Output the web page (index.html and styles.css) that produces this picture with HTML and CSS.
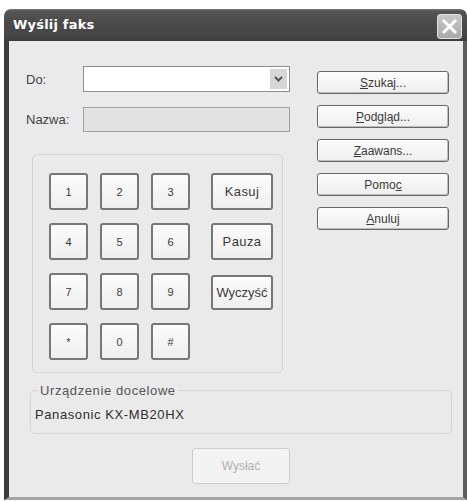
FILE: index.html
```html
<!DOCTYPE html>
<html lang="pl">
<head>
<meta charset="utf-8">
<title>Wyślij faks</title>
<link rel="stylesheet" href="styles.css">
</head>
<body>
<div class="window">
  <div class="titlebar">
    <span class="title">Wyślij faks</span>
    <span class="close">
      <svg width="23" height="23" viewBox="0 0 23 23"><path d="M6 6 L17 17 M17 6 L6 17" stroke="#fff" stroke-width="3" stroke-linecap="square" fill="none"/></svg>
    </span>
  </div>
  <div class="client">
    <div class="top">
      <div class="left">
        <div class="row">
          <span class="label">Do:</span>
          <div class="combo">
            <span class="combo-btn"><svg width="9" height="6" viewBox="0 0 9 6"><path d="M1 1 L4.5 4.5 L8 1" stroke="#555" stroke-width="2" fill="none"/></svg></span>
          </div>
        </div>
        <div class="row row-name">
          <span class="label">Nazwa:</span>
          <div class="textbox"></div>
        </div>
        <div class="keypad">
          <div class="keys">
            <button class="btn key">1</button>
            <button class="btn key">2</button>
            <button class="btn key">3</button>
            <button class="btn side">Kasuj</button>
            <button class="btn key">4</button>
            <button class="btn key">5</button>
            <button class="btn key">6</button>
            <button class="btn side">Pauza</button>
            <button class="btn key">7</button>
            <button class="btn key">8</button>
            <button class="btn key">9</button>
            <button class="btn side clear">Wyczyść</button>
            <button class="btn key">*</button>
            <button class="btn key">0</button>
            <button class="btn key">#</button>
          </div>
        </div>
      </div>
      <div class="right">
        <button class="btn cmd"><u>S</u>zukaj...</button>
        <button class="btn cmd"><u>P</u>odgląd...</button>
        <button class="btn cmd"><u>Z</u>aawans...</button>
        <button class="btn cmd">Pomo<u>c</u></button>
        <button class="btn cmd"><u>A</u>nuluj</button>
      </div>
    </div>
    <fieldset class="device">
      <legend>Urządzenie docelowe</legend>
      <div class="device-name">Panasonic KX-MB20HX</div>
    </fieldset>
    <div class="send-row">
      <button class="btn send" disabled>Wysłać</button>
    </div>
  </div>
</div>
</body>
</html>
```
FILE: styles.css
```css
body {
  margin: 0;
  background: #ffffff;
  font-family: "Liberation Sans", Arial, sans-serif;
  color: #383838;
}

.window {
  margin: 9px 0 0 4px;
  width: 463px;
}

.titlebar {
  height: 32px;
  box-sizing: border-box;
  display: flex;
  justify-content: space-between;
  padding: 0 5px 0 9px;
  background: linear-gradient(#7a7a7a 0, #555 2px, #4b4b4b 40%, #444 90%, #3a3a3a 100%);
  border-radius: 7px 7px 0 0;
}

.title {
  color: #fff;
  font-family: "DejaVu Sans", "Liberation Sans", sans-serif;
  font-weight: bold;
  font-size: 13px;
  line-height: 32px;
  letter-spacing: 0.2px;
}

.close {
  margin-top: 5px;
  width: 25px;
  height: 25px;
  box-sizing: border-box;
  border: 1px solid #e2e2e2;
  border-radius: 3px;
  background: linear-gradient(#c9c9c9, #a9a9a9);
  display: flex;
  align-items: center;
  justify-content: center;
}

.client {
  height: 459px;
  box-sizing: border-box;
  background: #eaeaea;
  border-left: 5px solid #3c3c3c;
  border-right: 4px solid #5c5c5c;
  border-bottom: 3px solid #a4a4a4;
  padding: 25px 0 0 17px;
}

.top {
  display: flex;
  gap: 27px;
}

.left {
  width: 264px;
}

.row {
  display: flex;
  align-items: center;
  height: 26px;
}

.row-name {
  margin-top: 15px;
  height: 25px;
}

.label {
  width: 57px;
  font-size: 13px;
  color: #444;
}

.combo {
  width: 207px;
  height: 26px;
  box-sizing: border-box;
  border: 1px solid #8e8e8e;
  background: #fff;
  display: flex;
  justify-content: flex-end;
  padding: 2px;
}

.combo-btn {
  width: 17px;
  background: #d6d6d6;
  display: flex;
  align-items: center;
  justify-content: center;
}

.textbox {
  width: 207px;
  height: 25px;
  box-sizing: border-box;
  border: 1px solid #a0a0a0;
  background: #e2e2e2;
}

.keypad {
  margin: 22px 0 0 6px;
  width: 251px;
  height: 219px;
  box-sizing: border-box;
  border: 1px solid #d4d4d4;
  border-radius: 5px;
  padding: 18px 0 0 16px;
}

.keys {
  display: grid;
  grid-template-columns: 39px 39px 39px 71px;
  grid-auto-rows: 37px;
  column-gap: 12px;
  row-gap: 13px;
}

.btn {
  font-family: "Liberation Sans", Arial, sans-serif;
  color: #3a3a3a;
  background: linear-gradient(#fbfbfb, #efefef);
  border: 1px solid #666;
  border-radius: 3px;
  box-shadow: inset -1px -1px 0 #bdbdbd, inset 1px 1px 0 #fff;
  padding: 0;
}

.key {
  font-size: 11px;
  border-width: 2px;
  border-color: #777;
  box-shadow: none;
}

.side {
  width: 62px;
  justify-self: end;
  font-size: 13px;
  letter-spacing: 0.4px;
  border-width: 2px;
  border-color: #777;
  box-shadow: none;
}

.clear {
  margin-top: 2px;
  letter-spacing: 0;
}

.right {
  padding-top: 5px;
  display: flex;
  flex-direction: column;
  gap: 11px;
}

.cmd {
  width: 132px;
  height: 23px;
  font-size: 12px;
}

.device {
  margin: 10px 0 0 4px;
  width: 422px;
  box-sizing: border-box;
  border: 1px solid #d4d4d4;
  border-radius: 5px;
  padding: 9px 4px 11px;
}

.device legend {
  margin-left: 3px;
  padding: 0 2px;
  font-size: 13px;
  line-height: 15px;
  color: #555;
  letter-spacing: 0.6px;
}

.device-name {
  font-size: 13px;
  line-height: 15px;
  color: #2e2e2e;
  letter-spacing: 0.6px;
}

.send-row {
  margin: 14px 0 0 166px;
}

.send {
  width: 98px;
  height: 36px;
  font-size: 12px;
  color: #b2b2b2;
  border-color: #cdcdcd;
  box-shadow: none;
  background: #f3f3f3;
}
```
